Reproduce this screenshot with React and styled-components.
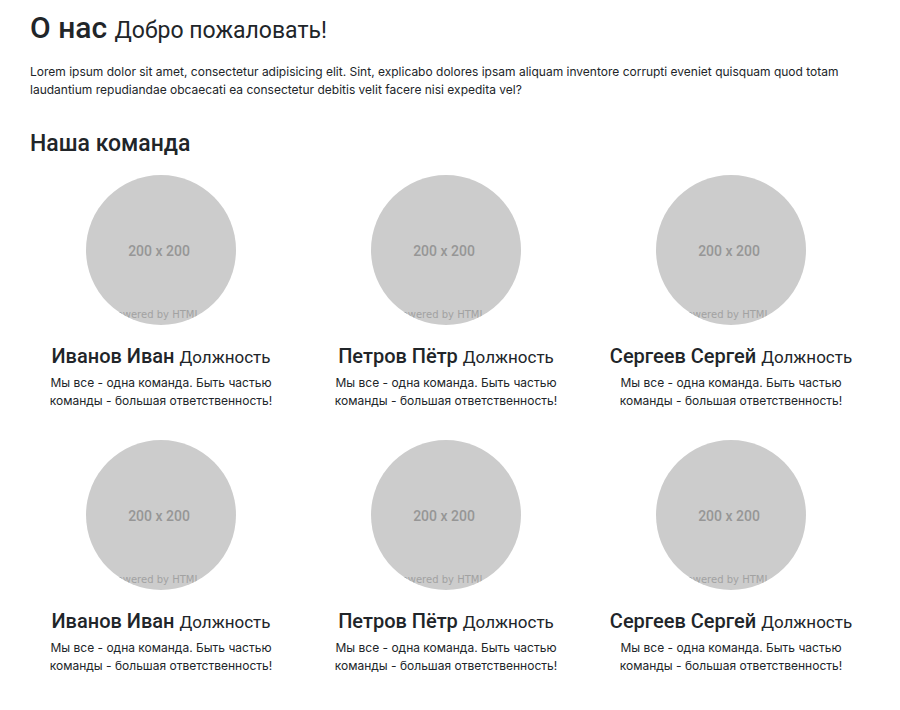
import React from 'react';
import styled, { createGlobalStyle } from 'styled-components';

const GlobalStyle = createGlobalStyle`
  *, *::before, *::after { box-sizing: border-box; }
  body {
    margin: 0;
    background: #fff;
    color: #212529;
    font-family: Inter, "Liberation Sans", sans-serif;
    font-size: 12px;
    line-height: 18px;
  }
  h1, h2, h3 { font-family: Roboto, "Liberation Sans", sans-serif; }
  small { font-weight: 400; line-height: 1; }
`;

const Page = styled.main`
  padding: 8px 38px 32px 30px;
`;

const Title = styled.h1`
  margin: 0 0 16px;
  font-size: 30px;
  line-height: 39px;
  font-weight: 500;

  small { font-size: 23px; }
`;

const Intro = styled.p`
  margin: 0 0 30px;
`;

const SectionTitle = styled.h2`
  margin: 0 0 16px;
  font-size: 23px;
  line-height: 30px;
  font-weight: 500;
`;

const Team = styled.section`
  display: grid;
  grid-template-columns: repeat(3, minmax(0, 1fr));
  column-gap: 23px;
  row-gap: 30px;
`;

const Member = styled.article`
  display: flex;
  flex-direction: column;
  align-items: center;
  text-align: center;
`;

const Avatar = styled.svg`
  display: block;
  width: 150px;
  height: 150px;
  margin-bottom: 18px;
`;

const Name = styled.h3`
  margin: 0 0 5px;
  font-size: 20px;
  line-height: 26px;
  font-weight: 500;
  white-space: nowrap;

  small { font-size: 17px; }
`;

const About = styled.p`
  margin: 0;
  max-width: 224px;
`;

const people = ['Иванов Иван', 'Петров Пётр', 'Сергеев Сергей'];
const members = [...people, ...people];

function Placeholder({ id }) {
  return (
    <Avatar viewBox="0 0 150 150" role="img" aria-label="200 x 200">
      <clipPath id={id}><circle cx="75" cy="75" r="75" /></clipPath>
      <g clipPath={`url(#${id})`}>
        <rect width="150" height="150" fill="#ccc" />
        <text x="73" y="81" textAnchor="middle" fontFamily="Roboto, sans-serif" fontSize="14" fontWeight="500" fill="#969696">200 x 200</text>
        <text x="25" y="143" fontFamily="DejaVu Sans, sans-serif" fontSize="10" fill="#a2a2a2">Powered by HTML</text>
      </g>
    </Avatar>
  );
}

export default function App() {
  return (
    <>
      <GlobalStyle />
      <Page>
        <Title>О нас <small>Добро пожаловать!</small></Title>
        <Intro>
          Lorem ipsum dolor sit amet, consectetur adipisicing elit. Sint, explicabo dolores ipsam aliquam inventore corrupti eveniet quisquam quod totam laudantium repudiandae obcaecati ea consectetur debitis velit facere nisi expedita vel?
        </Intro>
        <SectionTitle>Наша команда</SectionTitle>
        <Team>
          {members.map((name, index) => (
            <Member key={index}>
              <Placeholder id={`avatar-${index}`} />
              <Name>{name} <small>Должность</small></Name>
              <About>Мы все - одна команда. Быть частью команды - большая ответственность!</About>
            </Member>
          ))}
        </Team>
      </Page>
    </>
  );
}
